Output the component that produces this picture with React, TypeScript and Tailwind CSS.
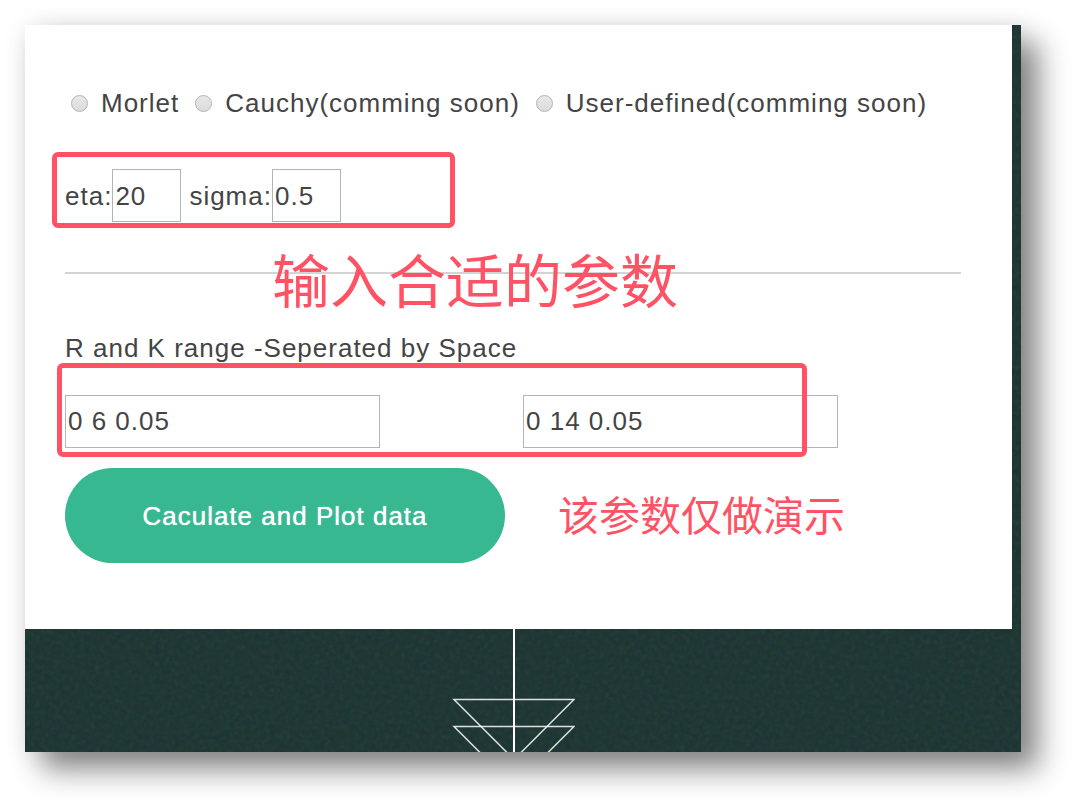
import { useState } from "react";

const wavelets = [
  { id: "morlet", label: "Morlet" },
  { id: "cauchy", label: "Cauchy(comming soon)" },
  { id: "custom", label: "User-defined(comming soon)" },
];

function DarkTexture() {
  return (
    <svg
      className="absolute inset-0 h-full w-full opacity-10"
      aria-hidden="true"
    >
      <filter id="grain" colorInterpolationFilters="sRGB">
        <feTurbulence
          type="fractalNoise"
          baseFrequency="0.2"
          numOctaves="3"
          seed="4"
        />
      </filter>
      <rect width="100%" height="100%" filter="url(#grain)" />
    </svg>
  );
}

function ArrowDown() {
  return (
    <svg
      width="124"
      height="123"
      viewBox="0 0 124 123"
      fill="none"
      stroke="white"
      strokeWidth="1.5"
      className="relative"
      aria-hidden="true"
    >
      <path d="M63 0V123" strokeWidth="2" />
      <path d="M3 70.5H123L63 130.5Z" strokeOpacity="0.85" />
      <path d="M3 97.5H123L63 157.5Z" strokeOpacity="0.85" />
    </svg>
  );
}

export default function App() {
  const [wavelet, setWavelet] = useState("");
  const [eta, setEta] = useState("20");
  const [sigma, setSigma] = useState("0.5");
  const [rRange, setRRange] = useState("0 6 0.05");
  const [kRange, setKRange] = useState("0 14 0.05");

  return (
    <div className="bg-white pt-[25px] pr-[59px] pb-[59px] pl-[25px] font-['Liberation_Sans','Noto_Sans_CJK_SC',sans-serif] text-[26px] leading-[52px] tracking-[1px] text-[#444444]">
      <div className="relative bg-[#1b3431] shadow-[17px_17px_28px_rgba(0,0,0,0.48),0_0_24px_rgba(0,0,0,0.08)]">
        <DarkTexture />

        <form
          className="relative mr-[9px] bg-white pt-[52px] pr-[51px] pb-[66px] pl-10"
          onSubmit={(e) => e.preventDefault()}
        >
          {/* Wavelet type */}
          <div className="flex gap-4 pl-1.5 whitespace-nowrap">
            {wavelets.map((w) => (
              <label key={w.id} className="flex items-center gap-[13px]">
                <input
                  type="radio"
                  name="wavelet"
                  value={w.id}
                  checked={wavelet === w.id}
                  onChange={() => setWavelet(w.id)}
                  className="h-[17px] w-[17px] appearance-none rounded-full border border-[#b4b4b4] bg-linear-to-b from-[#e8e8e8] to-[#dcdcdc] checked:from-[#888888] checked:to-[#555555]"
                />
                {w.label}
              </label>
            ))}
          </div>

          {/* Parameters */}
          <div className="relative mt-10 flex items-center gap-2">
            <label className="flex items-center">
              eta:
              <input
                type="text"
                value={eta}
                onChange={(e) => setEta(e.target.value)}
                className="h-[53px] w-[69px] border border-[#b4b4b4] bg-white px-0.5 pt-0.5 tracking-[1px]"
              />
            </label>
            <label className="flex items-center">
              sigma:
              <input
                type="text"
                value={sigma}
                onChange={(e) => setSigma(e.target.value)}
                className="h-[53px] w-[69px] border border-[#b4b4b4] bg-white px-0.5 pt-0.5 tracking-[1px]"
              />
            </label>
            <div className="pointer-events-none absolute -top-[17px] -left-[13px] h-[76px] w-[403px] rounded-md border-5 border-[#ff5365]" />
          </div>

          <div className="relative mt-[50px]">
            <hr className="border-t-2 border-[#d4d4d4]" />
            <p className="absolute -top-[18px] left-[207px] text-[58px] leading-[58px] tracking-normal whitespace-nowrap text-[#ff5365]">
              输入合适的参数
            </p>
          </div>

          {/* Ranges */}
          <p className="mt-12">R and K range -Seperated by Space</p>
          <div className="relative mt-[21px] grid grid-cols-2 gap-5">
            <input
              type="text"
              aria-label="R range"
              value={rRange}
              onChange={(e) => setRRange(e.target.value)}
              className="h-[53px] w-[72%] border border-[#b4b4b4] bg-white px-0.5 tracking-[1px]"
            />
            <input
              type="text"
              aria-label="K range"
              value={kRange}
              onChange={(e) => setKRange(e.target.value)}
              className="h-[53px] w-[72%] border border-[#b4b4b4] bg-white px-0.5 tracking-[1px]"
            />
            <div className="pointer-events-none absolute -top-8 -left-2 h-[94px] w-[750px] rounded-md border-5 border-[#ff5365]" />
          </div>

          <div className="mt-5 flex items-center gap-[53px]">
            <button
              type="submit"
              className="h-[95px] w-[440px] cursor-pointer rounded-full bg-[#37b891] tracking-[1px] text-white [text-shadow:0_0_1px_white]"
            >
              Caculate and Plot data
            </button>
            <p className="pt-0.5 text-[41px] tracking-normal whitespace-nowrap text-[#ff5365]">
              该参数仅做演示
            </p>
          </div>
        </form>

        <div className="relative flex justify-center pr-[60px] pl-10">
          <ArrowDown />
        </div>
      </div>
    </div>
  );
}
